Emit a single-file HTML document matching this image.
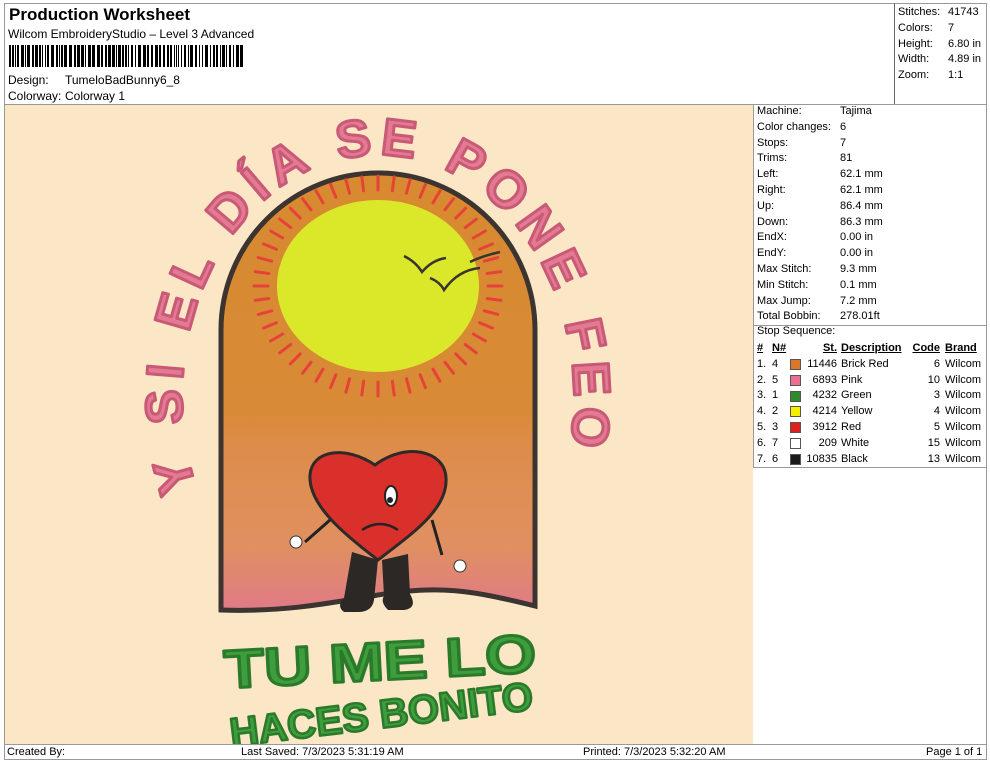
<!DOCTYPE html>
<html><head><meta charset="utf-8">
<style>
body{margin:0;width:990px;height:762px;background:#fff;font-family:"Liberation Sans",sans-serif;color:#000;position:relative;overflow:hidden}
.a{position:absolute;white-space:nowrap}
.r{font-size:11px}
.tbl{font-size:11px;line-height:15.8px}
</style></head><body>
<div class="a" style="left:4px;top:3px;width:983px;height:757px;border:1px solid #999;box-sizing:border-box"></div>
<div class="a" style="left:4px;top:104px;width:983px;height:1px;background:#999"></div>
<div class="a" style="left:894px;top:3px;width:1px;height:101px;background:#666"></div>
<div class="a" style="left:9px;top:5px;font-size:17px;font-weight:bold">Production Worksheet</div>
<div class="a" style="left:8px;top:27px;font-size:12px">Wilcom EmbroideryStudio – Level 3 Advanced</div>
<svg class="a" style="left:9px;top:45px" width="236" height="22" id="bc"></svg>
<div class="a" style="left:8px;top:73px;font-size:12px">Design:</div>
<div class="a" style="left:65px;top:73px;font-size:12px">TumeloBadBunny6_8</div>
<div class="a" style="left:8px;top:89px;font-size:12px">Colorway:</div>
<div class="a" style="left:65px;top:89px;font-size:12px">Colorway 1</div>
<div class="a r" style="left:898px;top:5px;line-height:15.8px">Stitches:<br>Colors:<br>Height:<br>Width:<br>Zoom:</div>
<div class="a r" style="left:948px;top:5px;line-height:15.8px">41743<br>7<br>6.80 in<br>4.89 in<br>1:1</div>

<div class="a" style="left:5px;top:105px;width:748px;height:639px;background:#fbe7c6"></div>
<div class="a" style="left:753px;top:105px;width:1px;height:363px;background:#999"></div>
<div class="a" style="left:753px;top:325px;width:234px;height:1px;background:#999"></div>
<div class="a" style="left:753px;top:467px;width:234px;height:1px;background:#999"></div>
<div class="a r" style="left:757px;top:104px;line-height:15.8px">Machine:<br>Color changes:<br>Stops:<br>Trims:<br>Left:<br>Right:<br>Up:<br>Down:<br>EndX:<br>EndY:<br>Max Stitch:<br>Min Stitch:<br>Max Jump:<br>Total Bobbin:</div>
<div class="a r" style="left:840px;top:104px;line-height:15.8px">Tajima<br>6<br>7<br>81<br>62.1 mm<br>62.1 mm<br>86.4 mm<br>86.3 mm<br>0.00 in<br>0.00 in<br>9.3 mm<br>0.1 mm<br>7.2 mm<br>278.01ft</div>
<div class="a r" style="left:757px;top:325px">Stop Sequence:</div>
<div class="a tbl" style="left:757px;top:341px"><b style="text-decoration:underline">#</b><br>1.<br>2.<br>3.<br>4.<br>5.<br>6.<br>7.</div>
<div class="a tbl" style="left:772px;top:341px"><b style="text-decoration:underline">N#</b><br>4<br>5<br>1<br>2<br>3<br>7<br>6</div>
<div class="a" style="left:790px;top:359px;width:9px;height:9px;background:#d9782a;border:1px solid #555"></div>
<div class="a" style="left:790px;top:375px;width:9px;height:9px;background:#ea6f93;border:1px solid #555"></div>
<div class="a" style="left:790px;top:391px;width:9px;height:9px;background:#2f8a2e;border:1px solid #555"></div>
<div class="a" style="left:790px;top:406px;width:9px;height:9px;background:#f5f000;border:1px solid #555"></div>
<div class="a" style="left:790px;top:422px;width:9px;height:9px;background:#e0201e;border:1px solid #555"></div>
<div class="a" style="left:790px;top:438px;width:9px;height:9px;background:#fff;border:1px solid #555"></div>
<div class="a" style="left:790px;top:454px;width:9px;height:9px;background:#1a1a1a;border:1px solid #555"></div>
<div class="a tbl" style="left:796px;top:341px;width:41px;text-align:right"><b style="text-decoration:underline">St.</b><br>11446<br>6893<br>4232<br>4214<br>3912<br>209<br>10835</div>
<div class="a tbl" style="left:841px;top:341px"><b style="text-decoration:underline">Description</b><br>Brick Red<br>Pink<br>Green<br>Yellow<br>Red<br>White<br>Black</div>
<div class="a tbl" style="left:900px;top:341px;width:40px;text-align:right"><b style="text-decoration:underline">Code</b><br>6<br>10<br>3<br>4<br>5<br>15<br>13</div>
<div class="a tbl" style="left:945px;top:341px"><b style="text-decoration:underline">Brand</b><br>Wilcom<br>Wilcom<br>Wilcom<br>Wilcom<br>Wilcom<br>Wilcom<br>Wilcom</div>

<svg class="a" style="left:0;top:0" width="753" height="744">
<defs>
<linearGradient id="g" x1="0" y1="0" x2="0" y2="1" gradientUnits="objectBoundingBox">
<stop offset="0" stop-color="#d88a30"/><stop offset="0.55" stop-color="#d98a36"/><stop offset="0.62" stop-color="#de8c4a"/><stop offset="0.85" stop-color="#e09060"/><stop offset="1" stop-color="#e07a88"/>
</linearGradient>
<path id="arc" d="M183,492 A210,256 0 1 1 573,492"/>
</defs>
<path d="M221,330 A157,157 0 0 1 535,330 L535,606 C470,590 440,585 378,595 C320,605 280,612 221,610 Z" fill="url(#g)" stroke="#3b3430" stroke-width="5"/>
<g id="rays" stroke="#e5433a" stroke-width="3" stroke-linecap="round"></g>
<ellipse cx="378" cy="286" rx="101" ry="86" fill="#dbe82a"/>
<path d="M404,256 q12,6 18,16 q10,-12 24,-14 M430,278 q10,4 14,12 q14,-20 36,-22 M470,262 q12,-6 30,-10" fill="none" stroke="#3a3430" stroke-width="2.5"/>
<path d="M378,560 C345,535 308,505 310,475 C312,450 345,445 375,465 C405,442 445,450 446,478 C448,510 410,535 378,560 Z" fill="#d9302c" stroke="#2e2a28" stroke-width="3"/>
<ellipse cx="391" cy="496" rx="6" ry="10" fill="#fff" stroke="#222" stroke-width="2"/>
<circle cx="390" cy="500" r="3" fill="#222"/>
<path d="M362,530 q18,-12 36,0" fill="none" stroke="#222" stroke-width="2.5"/>
<path d="M330,520 l-25,22 M432,520 l10,35" stroke="#222" stroke-width="3" fill="none"/>
<circle cx="296" cy="542" r="6" fill="#fff" stroke="#333"/>
<circle cx="460" cy="566" r="6" fill="#fff" stroke="#333"/>
<path d="M352,552 l26,8 l-4,40 q-2,12 -16,12 l-14,0 q-8,-6 0,-14 Z M382,560 l26,-6 l2,40 q8,14 -6,16 l-16,0 q-8,-8 -4,-14 Z" fill="#2c2826"/>
<text font-family="Liberation Sans,sans-serif" font-weight="bold" font-size="52" fill="#e37a92" stroke="#c85a78" stroke-width="3" stroke-linejoin="round" dominant-baseline="middle"><textPath href="#arc" textLength="880" lengthAdjust="spacing">Y SI EL DÍA SE PONE FEO</textPath></text>
<text x="380" y="680" text-anchor="middle" font-family="Liberation Sans,sans-serif" font-weight="bold" font-size="54" fill="#3f9e3c" stroke="#2b7a2b" stroke-width="3" stroke-linejoin="round" textLength="312" lengthAdjust="spacingAndGlyphs" transform="rotate(-3 380 660)">TU ME LO</text>
<text x="381" y="728" text-anchor="middle" font-family="Liberation Sans,sans-serif" font-weight="bold" font-size="40" fill="#3f9e3c" stroke="#2b7a2b" stroke-width="2.5" stroke-linejoin="round" textLength="305" lengthAdjust="spacingAndGlyphs" transform="rotate(-7 381 712)">HACES BONITO</text>
</svg>

<div class="a" style="left:4px;top:744px;width:983px;height:1px;background:#999"></div>
<div class="a r" style="left:7px;top:746px">Created By:</div>
<div class="a r" style="left:241px;top:746px">Last Saved: 7/3/2023 5:31:19 AM</div>
<div class="a r" style="left:583px;top:746px">Printed: 7/3/2023 5:32:20 AM</div>
<div class="a r" style="left:926px;top:746px">Page 1 of 1</div>
<script>
var g=document.getElementById('rays'),s='';
for(var i=0;i<48;i++){var a=i*Math.PI*2/48,c=Math.cos(a),n=Math.sin(a);
s+='<line x1="'+(378+c*110)+'" y1="'+(286+n*96)+'" x2="'+(378+c*124)+'" y2="'+(286+n*110)+'"/>';}
g.innerHTML=s;
var b=document.getElementById('bc'),t='',x=0,k=7;
while(x<234){k=(k*37+11)%97;var w=1+(k%3);t+='<rect x="'+x+'" y="0" width="'+w+'" height="22" fill="#000"/>';x+=w+1+(k%2);}
b.innerHTML=t;
</script>
</body></html>
